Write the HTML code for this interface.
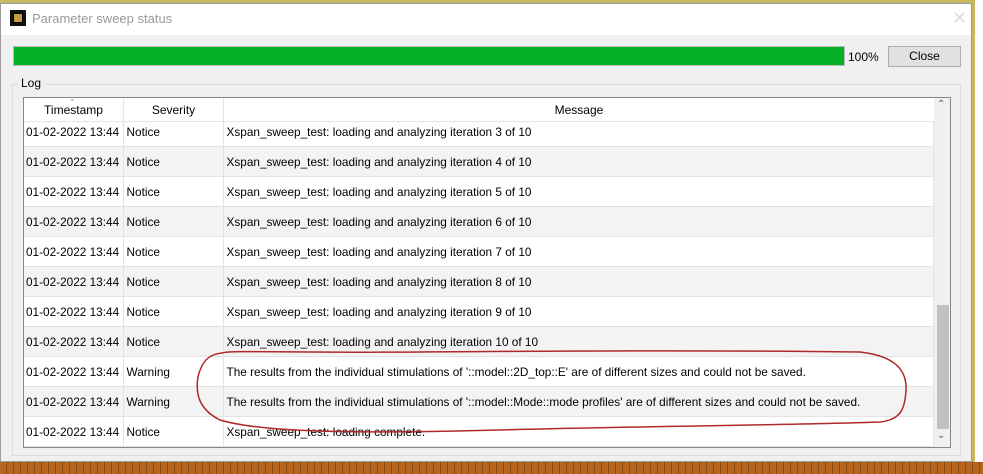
<!DOCTYPE html>
<html><head><style>
body{margin:0;width:983px;height:474px;overflow:hidden;background:#c8b860;font-family:"Liberation Sans",sans-serif;font-size:12px;color:#000;position:relative}
.bot{position:absolute;left:0;top:462px;width:983px;height:12px;background:repeating-linear-gradient(90deg,#b5651d 0 6px,#8a4a10 6px 7px)}
.win{position:absolute;left:0;top:3px;width:972px;height:459px;background:#f0f0f0;border:1px solid #9a9a9a;box-sizing:border-box}
.title{position:absolute;left:0;top:0;width:100%;height:31px;background:#fff}
.abs{position:absolute}
table{border-collapse:collapse;table-layout:fixed}
td{font-size:11.8px}
</style></head><body>
<div class="bot"></div>
<div class="abs" style="left:975px;top:0;width:8px;height:462px;background:#fff"></div>
<div class="win">
 <div class="title">
  <div class="abs" style="left:9px;top:6px;width:16px;height:16px;background:#111"></div>
  <div class="abs" style="left:12px;top:9px;width:10px;height:10px;background:#c89a40;border:1px solid #000;box-sizing:border-box"></div>
  <div class="abs" style="left:31px;top:7px;font-size:13px;color:#999">Parameter sweep status</div>
  <div class="abs" style="left:951px;top:4px;font-size:18px;color:#ddd">✕</div>
 </div>
</div>
<div class="abs" style="left:13px;top:46px;width:832px;height:20px;background:#06b025;border:1px solid #bcbcbc;box-sizing:border-box"></div>
<div class="abs" style="left:848px;top:50px">100%</div>
<div class="abs" style="left:888px;top:46px;width:73px;height:21px;background:#e1e1e1;border:1px solid #adadad;box-sizing:border-box;text-align:center;line-height:19px">Close</div>
<div class="abs" style="left:12px;top:84px;width:949px;height:372px;border:1px solid #dcdcdc;box-sizing:border-box"></div>
<div class="abs" style="left:18px;top:76px;background:#f0f0f0;padding:0 3px">Log</div>
<div class="abs" style="left:23px;top:97px;width:928px;height:351px;border:1px solid #828790;box-sizing:border-box;background:#fff;overflow:hidden">
 <div class="abs" style="left:-1px;top:18px;width:911px">
 <table style="width:911px">
 <colgroup><col style="width:100px"><col style="width:100px"><col></colgroup>
 <tbody id="tb"></tbody></table></div>
 <div class="abs" style="left:0;top:0;width:910px;height:23px;background:#fff;border-bottom:1px solid #e5e5e5">
  <div class="abs" style="left:0;top:0;width:99px;height:23px;border-right:1px solid #e5e5e5;text-align:center;line-height:25px">Timestamp</div>
  <div class="abs" style="left:45px;top:-4px;font-size:8px;color:#999">⌄</div>
  <div class="abs" style="left:100px;top:0;width:99px;height:23px;border-right:1px solid #e5e5e5;text-align:center;line-height:25px">Severity</div>
  <div class="abs" style="left:200px;top:0;width:710px;height:23px;text-align:center;line-height:25px">Message</div>
 </div>
 <div class="abs" style="left:910px;top:0;width:17px;height:349px;background:#f0f0f0">
  <div class="abs" style="left:3px;top:1px;color:#606060;font-size:10px">⌃</div>
  <div class="abs" style="left:3px;top:207px;width:12px;height:124px;background:#c1c1c1"></div>
  <div class="abs" style="left:3px;top:332px;color:#606060;font-size:10px">⌄</div>
 </div>
</div>
<svg class="abs" style="left:0;top:0" width="983" height="474"><path d="M222,353 C230,350 300,353 420,352 C560,351 700,350 860,352 C895,356 907,370 906,390 C905,410 900,420 880,422 C800,425 650,426 500,430 C350,434 260,432 220,420 C200,410 195,395 198,377 C202,360 210,354 222,353" fill="none" stroke="#b0282a" stroke-width="1.5"/></svg>
<script>
var msgs=[];for(var i=3;i<=10;i++)msgs.push(["Notice","Xspan_sweep_test: loading and analyzing iteration "+i+" of 10"]);
msgs.push(["Warning","The results from the individual stimulations of '::model::2D_top::E' are of different sizes and could not be saved."]);
msgs.push(["Warning","The results from the individual stimulations of '::model::Mode::mode profiles' are of different sizes and could not be saved."]);
msgs.push(["Notice","Xspan_sweep_test: loading complete."]);
var h="";msgs.forEach(function(m,k){var bg=k%2?"#f3f3f3":"#fff";h+='<tr style="height:30px;background:'+bg+'"><td style="border:1px solid #e3e3e3;border-left:0;padding:0 3px;white-space:nowrap">01-02-2022 13:44</td><td style="border:1px solid #e3e3e3;padding:0 3px">'+m[0]+'</td><td style="border:1px solid #e3e3e3;padding:0 3px;white-space:nowrap">'+m[1]+'</td></tr>'});
document.getElementById("tb").innerHTML=h;
</script>
</body></html>
